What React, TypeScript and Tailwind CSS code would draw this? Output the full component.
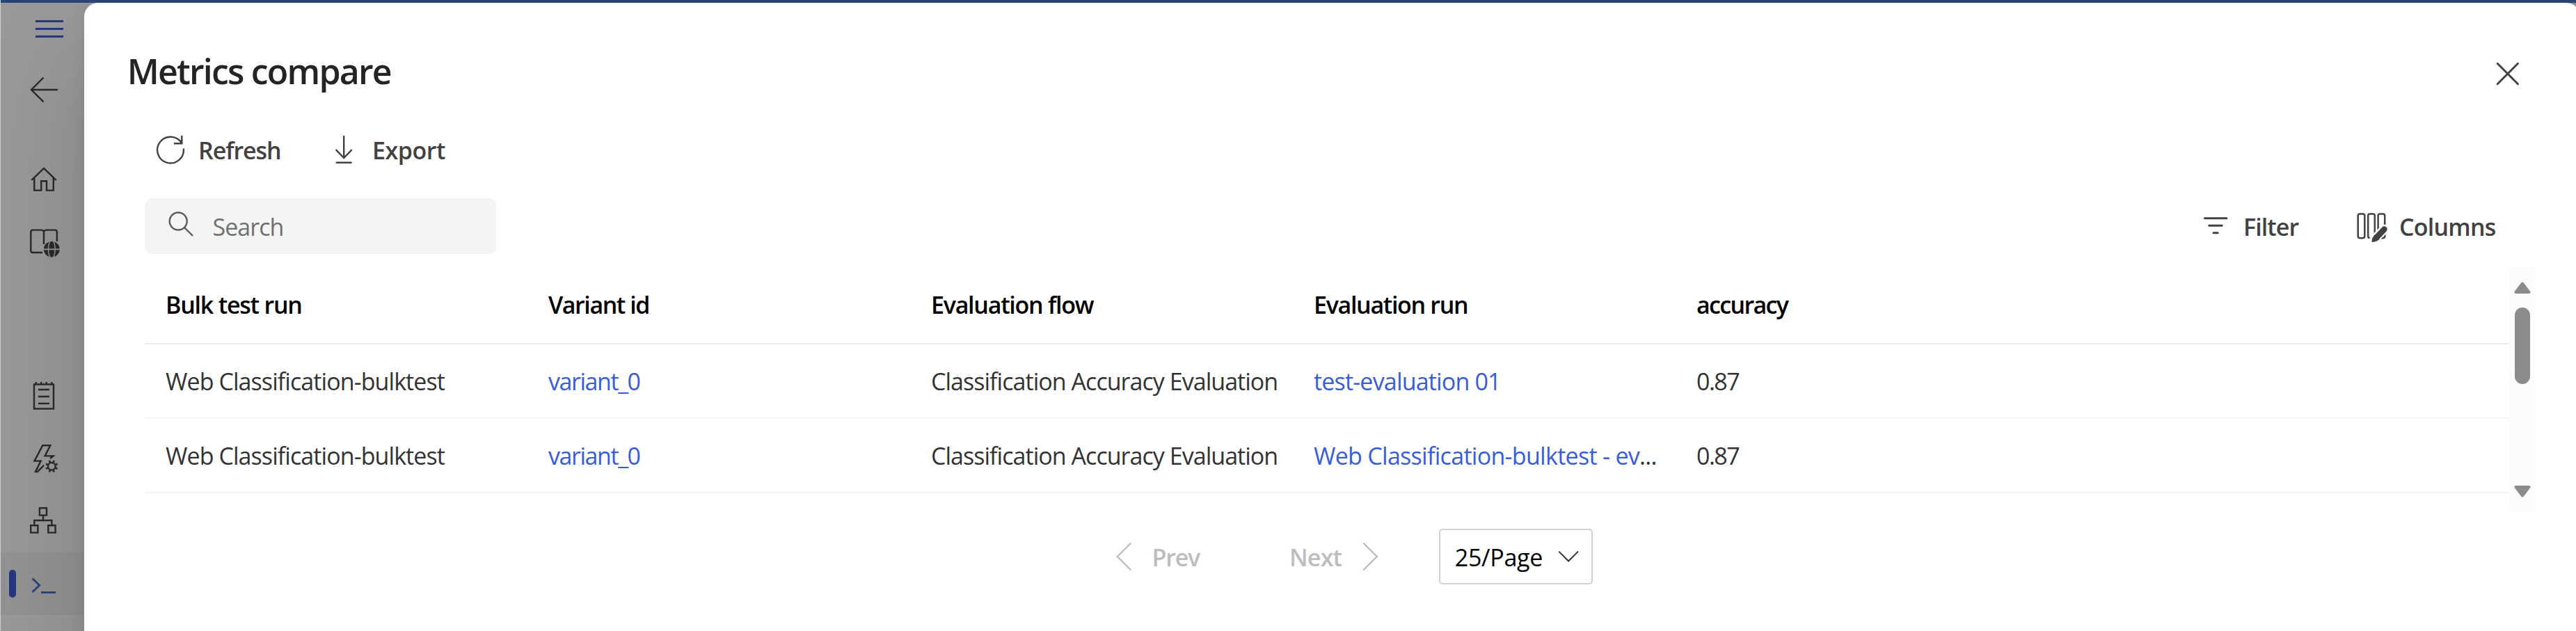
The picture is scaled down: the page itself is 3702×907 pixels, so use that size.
import type { ReactNode } from "react";

type IconProps = { box: string; className: string; children: ReactNode };

function Icon({ box, className, children }: IconProps) {
  return (
    <svg
      viewBox={box}
      className={`shrink-0 ${className}`}
      fill="none"
      stroke="currentColor"
      strokeWidth="2.4"
    >
      {children}
    </svg>
  );
}

const GEAR_ANGLES = [0, 45, 90, 135, 180, 225, 270, 315];

function Sidebar() {
  return (
    <nav className="flex w-[121px] shrink-0 flex-col border-l border-[#cfcfcf] bg-[#999999] text-[#2a2a2a]">
      <Icon box="1 4 120 80" className="h-20 w-[120px] text-[#243782]">
        <path d="M51 30.5H91M51 41.5H91M51 52.5H91" strokeWidth="3" />
      </Icon>
      <Icon box="1 84 120 90" className="h-[90px] w-[120px]">
        <path d="M83 129H45M62.5 111.5L45 129L62.5 146.3" />
      </Icon>
      <Icon box="1 213 120 90" className="mt-[39px] h-[90px] w-[120px]">
        <path d="M45.3 259L63 242L80.7 259" />
        <path d="M49.3 256V273.6H59.2V260.2H67V273.6H76.8V256" />
      </Icon>
      <Icon box="1 303 120 90" className="h-[90px] w-[120px]">
        <path d="M61 363H47.2Q44.3 363 44.3 360V333.5Q44.3 330.6 47.2 330.6H59Q63 330.6 63 334Q63 330.6 67 330.6H79Q81.9 330.6 81.9 333.5V347M63 334V351" />
        <g stroke="none" fill="currentColor">
          <circle cx="74.3" cy="358.3" r="11.4" />
        </g>
        <g stroke="#949494" strokeWidth="1.5">
          <path d="M62.5 358.3H86" strokeWidth="1.9" />
          <ellipse cx="74.3" cy="358.3" rx="4.9" ry="13" />
        </g>
      </Icon>
      <Icon box="1 524 120 90" className="mt-[131px] h-[90px] w-[120px]">
        <rect x="49" y="552.5" width="28" height="35" />
        <path d="M51.7 549V553M59.2 549V553M66.7 549V553M74.4 549V553M55 560H71M55 570H71M55 580H71" />
      </Icon>
      <Icon box="1 614 120 90" className="h-[90px] w-[120px]">
        <path d="M72 659L76.5 655.4H64.6L72.3 640.2H61.3L49.5 662.6H58.6L51 678H54L63 668.8" />
        <circle cx="74.3" cy="670.3" r="5.3" />
        {GEAR_ANGLES.map((a) => (
          <path
            key={a}
            d="M74.3 664V661.4"
            transform={`rotate(${a + 22.5} 74.3 670.3)`}
            strokeWidth="2.8"
          />
        ))}
      </Icon>
      <Icon box="1 704 120 90" className="h-[90px] w-[120px]">
        <path d="M56.9 730.3H67V740.6H56.9ZM44.2 755.2H54.4V765.6H44.2ZM69.3 755.2H79.6V765.6H69.3ZM62 740.6V748M49.3 755V748H74.4V755" />
      </Icon>
      <div className="flex h-[90px] items-center bg-black/4">
        <div className="ml-3 h-10 w-2.5 rounded-full bg-[#243782]" />
        <Icon box="23 794 98 90" className="h-[90px] w-[98px] text-[#264478]">
          <path d="M46.5 831.5L56.7 841.2L46.5 851M59 851.7H80" strokeWidth="2.8" />
        </Icon>
      </div>
    </nav>
  );
}

type Cell = { text: string; tracking: string; link?: boolean; clipped?: boolean };

const HEADERS: Cell[] = [
  { text: "Bulk test run", tracking: "tracking-[-1.22px]" },
  { text: "Variant id", tracking: "tracking-[-1.42px]" },
  { text: "Evaluation flow", tracking: "tracking-[-1.25px]" },
  { text: "Evaluation run", tracking: "tracking-[-1.31px]" },
  { text: "accuracy", tracking: "tracking-[-1.65px]" },
];

const ROWS: Cell[][] = [
  [
    { text: "Web Classification-bulktest", tracking: "tracking-[-0.92px]" },
    { text: "variant_0", tracking: "tracking-[-1.44px]", link: true },
    { text: "Classification Accuracy Evaluation", tracking: "tracking-[-0.96px]" },
    { text: "test-evaluation 01", tracking: "tracking-[-0.82px]", link: true },
    { text: "0.87", tracking: "tracking-[-1.5px]" },
  ],
  [
    { text: "Web Classification-bulktest", tracking: "tracking-[-0.92px]" },
    { text: "variant_0", tracking: "tracking-[-1.44px]", link: true },
    { text: "Classification Accuracy Evaluation", tracking: "tracking-[-0.96px]" },
    { text: "Web Classification-bulktest - ev", tracking: "tracking-[-0.7px]", link: true, clipped: true },
    { text: "0.87", tracking: "tracking-[-1.5px]" },
  ],
];

function Table() {
  return (
    <div className="mt-5 flex h-[350px] w-[3436px]">
      <div className="w-[3398px]">
        <div className="grid h-[110px] grid-cols-[550px_550px_550px_550px_550px] border-b-2 border-[#ebebeb] pt-7 pl-[30px] font-semibold text-black">
          {HEADERS.map((h) => (
            <span key={h.text} className={h.tracking}>
              {h.text}
            </span>
          ))}
        </div>
        {ROWS.map((row, i) => (
          <div
            key={i}
            className="grid h-[107px] grid-cols-[550px_550px_550px_550px_550px] border-b-2 border-[#f4f4f4] pt-7 pl-[30px] text-[#333333]"
          >
            {row.map((c, j) => (
              <span key={j} className={c.tracking}>
                {c.link ? <a className="text-[#385dd8]">{c.text}</a> : c.text}
                {c.clipped && "..."}
              </span>
            ))}
          </div>
        ))}
      </div>
      <div className="flex w-[38px] flex-col items-center bg-[#fcfcfc] pt-5 text-[#8b8b8b]">
        <svg viewBox="0 0 24 17" className="h-[17px] w-6" fill="currentColor" stroke="currentColor" strokeWidth="4" strokeLinejoin="round">
          <path d="M12 2.5L21.5 15H2.5Z" />
        </svg>
        <div className="mt-5 h-[110px] w-[22px] rounded-full bg-[#8b8b8b]" />
        <svg viewBox="0 0 24 17" className="mt-[146px] h-[17px] w-6" fill="currentColor" stroke="currentColor" strokeWidth="4" strokeLinejoin="round">
          <path d="M12 14.5L21.5 2H2.5Z" />
        </svg>
      </div>
    </div>
  );
}

export default function App() {
  return (
    <div className="flex h-[907px] w-[3702px] flex-col overflow-hidden bg-[#999999] font-['Open_Sans',sans-serif] text-[34px] leading-[50px] whitespace-nowrap">
      <div className="h-1 shrink-0 border-l border-[#cfcfcf] bg-[#264478]" />
      <div className="flex h-[903px] overflow-hidden">
        <Sidebar />
        <main className="h-[1100px] w-[3587px] shrink-0 rounded-[20px] bg-white pl-[87px] text-[#424242] shadow-[0_0_20px_rgba(0,0,0,0.08),0_80px_160px_rgba(0,0,0,0.16)]">
          <header className="-ml-[25.2px] flex pt-[68px] text-[#242424]">
            <h1 className="w-[3398.5px] text-[50px] leading-[60px] font-semibold tracking-[-1.8px]">
              Metrics compare
            </h1>
            <Icon box="3581.3 72 50 60" className="h-[60px] w-[50px] text-[#424242]">
              <path d="M3589.5 91.3L3618.8 120.7M3618.8 91.3L3589.5 120.7" strokeWidth="3" strokeLinecap="round" />
            </Icon>
          </header>

          <div className="mt-[59px] ml-[13px] flex font-semibold">
            <Icon box="221 191 48 50" className="h-[50px] w-12">
              <path d="M263.8 213.5A18.9 18.9 0 1 1 261 205.5M261.3 195V206.3H250" />
            </Icon>
            <span className="ml-4 w-[189px] tracking-[-1.05px]">Refresh</span>
            <Icon box="474 191 40 50" className="h-[50px] w-10">
              <path d="M494.2 195V227M482.7 215.2L494.2 227L505.7 215.2M482.8 233.7H505.6" />
            </Icon>
            <span className="ml-[21px] tracking-[-0.45px]">Export</span>
          </div>

          <div className="mt-11 flex h-20 w-[3436px] justify-between">
            <div className="flex w-[505px] rounded-[10px] bg-[#f4f4f4] pt-4 pl-8 text-[#707070]">
              <Icon box="240 301 40 50" className="h-[50px] w-10 text-[#5c5c5c]">
                <circle cx="256.2" cy="318" r="12.5" />
                <path d="M265 327L277 339" />
              </Icon>
              <span className="ml-[25.5px] tracking-[-0.96px]">Search</span>
            </div>
            <div className="flex w-[481px] pt-4 font-semibold">
              <Icon box="3163 301 42 50" className="h-[50px] w-[42px]">
                <path d="M3168.5 313.8H3199.8M3174.7 324.3H3193.2M3181 334.7H3187.2" strokeWidth="3" strokeLinecap="round" />
              </Icon>
              <span className="ml-[19px] w-40 tracking-[-0.92px]">Filter</span>
              <Icon box="3384 301 48 50" className="h-[50px] w-12">
                <g strokeWidth="2.5">
                  <rect x="3388.7" y="307.4" width="9.6" height="34.8" rx="2.6" />
                  <rect x="3403.2" y="307.4" width="9.6" height="34.8" rx="2.6" />
                  <rect x="3417.6" y="307.4" width="9.6" height="34.8" rx="2.6" />
                </g>
                <g strokeLinejoin="round">
                  <path d="M3411.5 344.6L3426.5 329.2" stroke="#ffffff" strokeWidth="13" strokeLinecap="round" />
                  <path d="M3416 340.6L3426.4 329.6" strokeWidth="8.6" strokeLinecap="round" />
                  <path d="M3412.6 338L3419 344.2L3414 346.7L3408.9 347.6L3409.6 342.5Z" fill="currentColor" strokeWidth="1" />
                </g>
              </Icon>
              <span className="ml-4 tracking-[-0.78px]">Columns</span>
            </div>
          </div>

          <Table />

          <div className="mt-[25px] ml-[1392px] flex h-20 font-semibold text-[#bdbdbd]">
            <Icon box="1600 776 30 50" className="mt-4 h-[50px] w-[30px]">
              <path d="M1625.3 780.5L1605.8 800L1625.3 819.5" />
            </Icon>
            <span className="mt-4 ml-[25.5px] w-[197.5px] tracking-[-1.19px]">Prev</span>
            <span className="mt-4 w-[102px] tracking-[-0.78px]">Next</span>
            <Icon box="1955 776 30 50" className="mt-4 h-[50px] w-[30px]">
              <path d="M1959.3 780.5L1978.8 800L1959.3 819.5" />
            </Icon>
            <div className="ml-[83px] flex h-20 w-[221px] rounded-[5px] border-2 border-[#d1d1d1] pt-3.5 pl-[20.8px] font-normal text-black">
              <span className="w-[145px] tracking-[-0.3px]">25/Page</span>
              <Icon box="2235.8 776 36 50" className="h-[50px] w-9 text-[#333333]">
                <path d="M2240 792.6L2253.9 806.5L2267.8 792.6" strokeWidth="2" />
              </Icon>
            </div>
          </div>
        </main>
      </div>
    </div>
  );
}
